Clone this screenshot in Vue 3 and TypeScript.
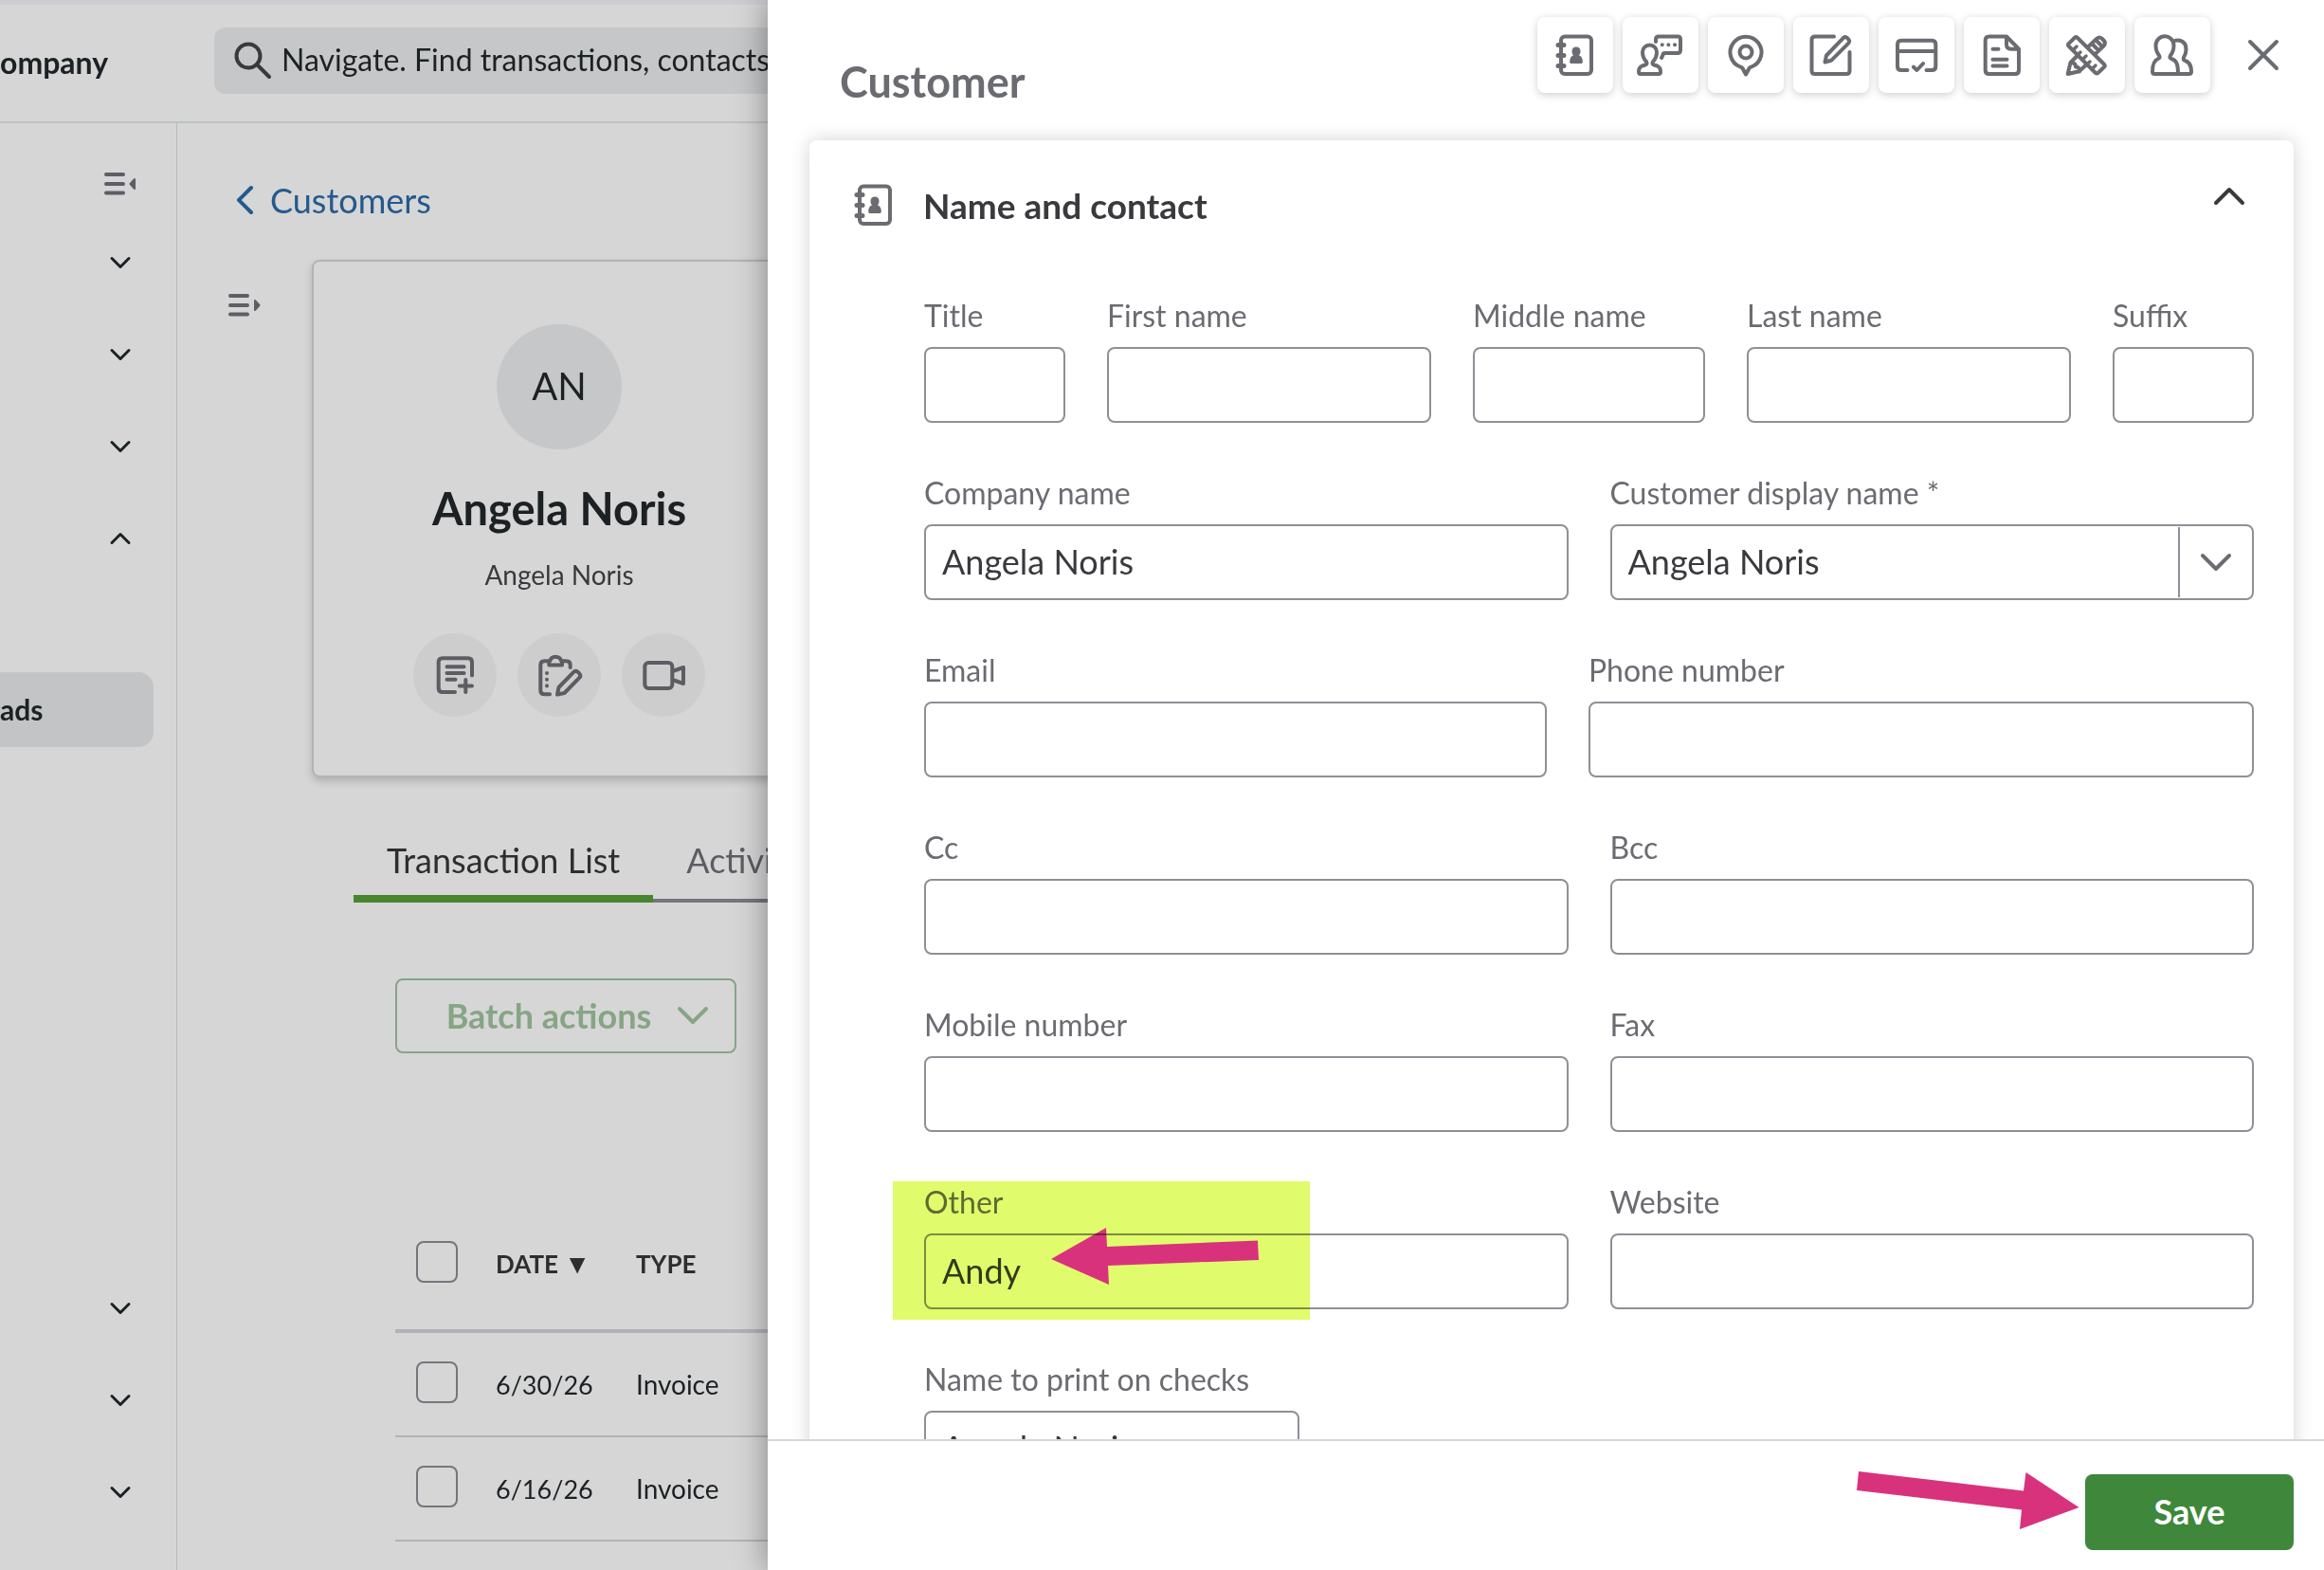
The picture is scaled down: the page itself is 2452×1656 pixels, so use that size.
<script setup lang="ts">
import { ref } from 'vue'

interface Field {
  id: string
  label: string
  value?: string
  marked?: boolean
  combo?: boolean
}

interface FieldRow {
  layout: string
  fields: Field[]
}

interface Transaction {
  date: string
  type: string
}

const icons: Record<string, string> = {
  book: '<rect x="9" y="4.5" width="32" height="39.5" rx="4"/><path d="M6 13.5h6M6 24.5h6M6 35.5h6" stroke-width="5"/><path d="M25 15.5c-3 0-4.500 2-4.500 4.500 0 2 .7 3.300 1.500 4.500-2.500.8-3.800 3-3.800 6.500 0 1.500.6 2 2 2h9.600c1.400 0 2-.5 2-2 0-3.500-1.300-5.700-3.800-6.500.8-1.200 1.500-2.500 1.500-4.500 0-2.500-1.500-4.500-4.500-4.500z" fill="currentColor" stroke="none"/>',
  chat: '<path d="M3 44Q1 44 1 41.500C1 36.500 4 35.500 8 34.500Q10.500 33.500 9 31C6 28 5 25 5 21A7.500 7.500 0 0 1 20 21C20 25 19 28 16 31Q14.500 33.500 17 34.500C21 35.500 24 36.500 24 41.500Q24 44 22 44Z"/><path d="M19 10V7.500Q19 4.500 22 4.500H42Q45 4.500 45 7.500V19Q45 22 42 22H28.500Q26.500 22 26.500 24L25 27M25.700 13.300h.1M32.300 13.300h.1M39 13.300h.1"/>',
  pin: '<path d="M24 44.500L20.500 38Q20 37 18 36.500A16.500 16.500 0 1 1 30 36.500Q28 37 27.500 38Z"/><circle cx="24" cy="21" r="6.500"/>',
  edit: '<path d="M27 4.500H7Q3.500 4.500 3.500 8V40.500Q3.500 44 7 44H40Q43.500 44 43.500 40.500V21"/><path d="M17.500 31.500L19 24.500 37 5.800Q39 4.200 41 6L42.500 7.800Q44 9.800 42 11.800L24 29.800Z"/>',
  card: '<path d="M14.500 40H8Q4 40 4 36V12.700Q4 8.700 8 8.700H40.300Q44.300 8.700 44.300 12.700V36Q44.300 40 40.300 40H34.500M4 20H44M21 36.700L24.500 40 31 33"/>',
  page: '<path d="M29 4.500H10.700Q6.700 4.500 6.700 8.500V40Q6.700 44 10.700 44H38Q42 44 42 40V17.700ZM29 4.500V13Q29 17.700 34 17.700H42M14.500 17.700H20.500M14.500 28.700H29.500M14.500 35.500H29.500"/>',
  tools: '<path d="M13.500 5.500Q12.300 4.500 11.200 5.500L4.500 12.200Q3.500 13.300 4.500 14.500L33 43Q34.300 44 35.500 43L42.200 36.500Q43.300 35.300 42.200 34Z"/><path d="M9 19l4-4M14 24l3-3M19 29l4-4M24 34l3-3M29 39l4-4" stroke-width="3.500"/><path d="M25 15.500L34.500 6.500Q37 4.500 39.500 6.500L41.500 8.500Q44 11 42 14L32.500 23M29 12l7 7M33 8l7 7M13.500 25L6.500 32 3.700 44 15.700 41.300 23 34.500M7 32q5 0 5 4.500 4.500 0 4 5"/>',
  people: '<path d="M5.500 44Q3 44 3 41.500C3 33 5 29.500 9 28Q11.500 27 10 24.500Q6.500 20 6.500 14A9.500 9.700 0 0 1 25.500 14Q25.500 20 22 24.500Q20.500 27 23 28C28 29.500 30 33 30 44Z"/><path d="M26.500 9Q29 8 32 8.700 38.500 10.500 38.500 18 38.500 23 36 26.500 35 29 37.500 30C42 31.500 44 35 44 41.500Q44 44 41.500 44H29"/>',
  note: '<path d="M24 42H11Q6.700 42 6.700 37.700V10.500Q6.700 6.300 11 6.300H37.700Q42 6.300 42 10.500V24.500M15.500 15.300H33.500M15.500 22H33.500M15.500 28.700H24.500M35.300 29V42M28.800 35.500H42"/>',
  clipboard: '<path d="M14 44.300H8.500Q4.300 44.300 4.300 40V13.500Q4.300 9.300 8.500 9.300H13.300V13.500H27V9.300H31.500Q35.700 9.300 35.700 13.500V16M14 9.500Q15.500 4.700 20.200 4.700T26.500 9.500M11 22v.1M11 28.700v.1M11 35.300v.1"/><path d="M22 44.500L23.500 37 39.500 20.700Q41.500 19 43.500 20.700L45.500 22.700Q47.200 24.700 45.500 26.700L29.500 43Z"/>',
  video: '<rect x="4.300" y="11" width="29" height="27" rx="4"/><path d="M35 19.500L45 16V33L35 29.500"/>',
}

const toolbar = [
  { icon: 'book', label: 'Name and contact' },
  { icon: 'chat', label: 'Communication' },
  { icon: 'pin', label: 'Addresses' },
  { icon: 'edit', label: 'Notes and attachments' },
  { icon: 'card', label: 'Payments' },
  { icon: 'page', label: 'Additional info' },
  { icon: 'tools', label: 'Custom fields' },
  { icon: 'people', label: 'Sub-customers' },
]

const quickActions = [
  { icon: 'note', label: 'Add note' },
  { icon: 'clipboard', label: 'Create task' },
  { icon: 'video', label: 'Video call' },
]

const rows = ref<FieldRow[]>([
  {
    layout: 'names',
    fields: [
      { id: 'title', label: 'Title' },
      { id: 'first', label: 'First name' },
      { id: 'middle', label: 'Middle name' },
      { id: 'last', label: 'Last name' },
      { id: 'suffix', label: 'Suffix' },
    ],
  },
  {
    layout: 'halves',
    fields: [
      { id: 'company', label: 'Company name', value: 'Angela Noris' },
      { id: 'display', label: 'Customer display name *', value: 'Angela Noris', combo: true },
    ],
  },
  { layout: 'email', fields: [{ id: 'email', label: 'Email' }, { id: 'phone', label: 'Phone number' }] },
  { layout: 'halves', fields: [{ id: 'cc', label: 'Cc' }, { id: 'bcc', label: 'Bcc' }] },
  { layout: 'halves', fields: [{ id: 'mobile', label: 'Mobile number' }, { id: 'fax', label: 'Fax' }] },
  {
    layout: 'halves',
    fields: [
      { id: 'other', label: 'Other', value: 'Andy', marked: true },
      { id: 'website', label: 'Website' },
    ],
  },
  { layout: 'checks', fields: [{ id: 'checks', label: 'Name to print on checks', value: 'Angela Noris' }] },
])

const transactions: Transaction[] = [
  { date: '6/30/26', type: 'Invoice' },
  { date: '6/16/26', type: 'Invoice' },
  { date: '', type: '' },
]

const upperGroups = [false, false, false, true]
const lowerGroups = [false, false, false]
</script>

<template>
  <div class="app">
    <header class="topbar">
      <span class="company">ompany</span>
      <label class="search">
        <svg width="40" height="40" viewBox="0 0 40 40" class="line dark"><circle cx="16" cy="15" r="12.500" /><path d="M25 24L38 37" /></svg>
        <input type="text" aria-label="Search" placeholder="Navigate. Find transactions, contacts, help, reports, and more." />
      </label>
    </header>

    <div class="body">
      <nav class="sidebar">
        <button class="side-row toggle" aria-label="Collapse menu">
          <svg width="36" height="28" viewBox="0 0 36 28" class="line grey"><path d="M3 4H21M3 14H21M3 23.500H21" /><path d="M33 9L28.500 14 33 19Z" fill="currentColor" stroke-width="2" /></svg>
        </button>
        <button v-for="(open, i) in upperGroups" :key="i" class="side-row" aria-label="Menu group">
          <svg width="28" height="20" viewBox="0 0 28 20" class="line ink"><path :d="open ? 'M5 14.500L14 5.500 23 14.500' : 'M5 5.500L14 14.500 23 5.500'" /></svg>
        </button>
        <a class="side-active" href="#">ads</a>
        <button v-for="(open, i) in lowerGroups" :key="'l' + i" class="side-row" aria-label="Menu group">
          <svg width="28" height="20" viewBox="0 0 28 20" class="line ink"><path d="M5 5.500L14 14.500 23 5.500" /></svg>
        </button>
      </nav>

      <main class="main">
        <a class="back" href="#">
          <svg width="20" height="32" viewBox="0 0 20 32" class="line"><path d="M16 3L3 16 16 29" stroke-width="4" /></svg>
          Customers
        </a>

        <div class="profile">
          <button class="expand" aria-label="Expand list">
            <svg width="36" height="28" viewBox="0 0 36 28" class="line grey"><path d="M3 4H21M3 14H21M3 23.500H21" /><path d="M29 9L33.500 14 29 19Z" fill="currentColor" stroke-width="2" /></svg>
          </button>
          <section class="person">
            <div class="avatar">AN</div>
            <h1>Angela Noris</h1>
            <p>Angela Noris</p>
            <div class="actions">
              <button v-for="a in quickActions" :key="a.icon" :aria-label="a.label">
                <svg width="48" height="48" viewBox="0 0 48 48" class="line" v-html="icons[a.icon]" />
              </button>
            </div>
          </section>
        </div>

        <div class="tabs" role="tablist">
          <button role="tab" class="tab active" aria-selected="true">Transaction List</button>
          <button role="tab" class="tab" aria-selected="false">Activity Feed</button>
        </div>

        <button class="batch">
          Batch actions
          <svg width="36" height="24" viewBox="0 0 36 24" class="line"><path d="M4 5L18 19 32 5" stroke-width="4" /></svg>
        </button>

        <table class="transactions">
          <thead>
            <tr>
              <th class="check"><input type="checkbox" aria-label="Select all" /></th>
              <th class="date">DATE <span class="sort">▼</span></th>
              <th>TYPE</th>
            </tr>
          </thead>
          <tbody>
            <tr v-for="(t, i) in transactions" :key="i">
              <td class="check"><input type="checkbox" :aria-label="'Select row ' + (i + 1)" /></td>
              <td class="date">{{ t.date }}</td>
              <td>{{ t.type }}</td>
            </tr>
          </tbody>
        </table>
      </main>
    </div>

    <aside class="drawer">
      <header class="drawer-head">
        <h2>Customer</h2>
        <div class="toolbar">
          <button v-for="t in toolbar" :key="t.icon" :aria-label="t.label">
            <svg width="48" height="48" viewBox="0 0 48 48" class="line" v-html="icons[t.icon]" />
          </button>
        </div>
        <button class="close" aria-label="Close">
          <svg width="40" height="40" viewBox="0 0 40 40" class="line"><path d="M6 6L34 34M34 6L6 34" /></svg>
        </button>
      </header>

      <div class="drawer-body">
        <section class="sheet">
          <div class="sheet-head">
            <svg width="48" height="48" viewBox="0 0 48 48" class="line" v-html="icons.book" />
            <h3>Name and contact</h3>
            <button aria-label="Collapse section">
              <svg width="36" height="24" viewBox="0 0 36 24" class="line"><path d="M4 19L18 5 32 19" /></svg>
            </button>
          </div>
          <form class="form">
            <div v-for="(row, i) in rows" :key="i" class="row" :class="row.layout">
              <div v-for="f in row.fields" :key="f.id" class="field">
                <label :for="f.id">{{ f.label }}</label>
                <div v-if="f.combo" class="combo">
                  <input :id="f.id" v-model="f.value" type="text" />
                  <button type="button" aria-label="Show names">
                    <svg width="36" height="24" viewBox="0 0 36 24" class="line"><path d="M4 5L18 19 32 5" stroke-width="4" /></svg>
                  </button>
                </div>
                <input v-else :id="f.id" v-model="f.value" class="box" type="text" />
                <div v-if="f.marked" class="marker">
                  <svg width="220" height="60" viewBox="0 0 220 60"><path d="M0 33L58 0 59 20 218 13.500 219 34 60 40 61 60Z" fill="#d9327d" /></svg>
                </div>
              </div>
            </div>
          </form>
        </section>
      </div>

      <footer class="drawer-foot">
        <svg width="235" height="62" viewBox="0 0 235 62"><path d="M2 0L176 20.500 178.500 1 234.500 38 172 61 174 40.500 0 20Z" fill="#d9327d" /></svg>
        <button class="save">Save</button>
      </footer>
    </aside>
  </div>
</template>

<style>
body {
  margin: 0;
  overflow: hidden;
}
</style>

<style scoped>
.app {
  position: relative;
  display: flex;
  flex-direction: column;
  height: 100vh;
  overflow: hidden;
  background: #d6d6d6;
  color: #1c2124;
  font-family: Lato, "Liberation Sans", sans-serif;
}

.app * {
  box-sizing: border-box;
}

button,
input {
  font-family: inherit;
  color: inherit;
}

button {
  display: flex;
  align-items: center;
  justify-content: center;
  padding: 0;
  border: 0;
  background: none;
}

a {
  color: inherit;
  text-decoration: none;
}

h1,
h2,
h3,
p {
  margin: 0;
}

svg {
  display: block;
  flex: none;
}

.line {
  fill: none;
  stroke: currentColor;
  stroke-width: 4;
  stroke-linecap: round;
  stroke-linejoin: round;
  overflow: visible;
}

.dark {
  color: #393a3d;
}

.grey {
  color: #5e5f66;
}

.ink {
  stroke-width: 3;
}

.topbar {
  display: flex;
  flex: none;
  height: 130px;
  border-top: 5px solid #cbcdd0;
  border-bottom: 2px solid #bcc2c6;
}

.company {
  width: 226px;
  padding-top: 41px;
  font-size: 32px;
  font-weight: 700;
  line-height: 40px;
}

.search {
  display: flex;
  flex: 1;
  align-items: center;
  gap: 11px;
  height: 70px;
  margin-top: 24px;
  padding-left: 20px;
  border-radius: 12px;
  background: #c6c7c9;
}

.search input {
  flex: 1;
  padding: 0 0 4px;
  border: 0;
  background: none;
  font-size: 32px;
}

.search input::placeholder {
  color: #1c2124;
}

.body {
  display: flex;
  flex: 1;
  min-height: 0;
}

.sidebar {
  flex: none;
  width: 187px;
  padding-top: 29px;
  border-right: 1px solid #b4b9bd;
}

.side-row {
  justify-content: flex-end;
  width: 100%;
  height: 97px;
  padding-right: 45px;
}

.toggle {
  height: 69px;
  padding-right: 41px;
}

.side-active {
  display: block;
  width: 162px;
  height: 79px;
  margin: 93px 0 543px;
  border-radius: 0 16px 16px 0;
  background: #c3c4c6;
  font-size: 30px;
  font-weight: 700;
  line-height: 78px;
}

.main {
  flex: 1;
  min-width: 0;
  padding-top: 59px;
}

.back {
  display: flex;
  align-items: center;
  gap: 16px;
  margin-left: 62px;
  color: #24598f;
  font-size: 36px;
  line-height: 44px;
}

.profile {
  display: flex;
  align-items: flex-start;
  gap: 52px;
  margin: 41px 0 0 52px;
}

.expand {
  width: 38px;
  height: 44px;
  margin-top: 26px;
}

.person {
  display: flex;
  flex-direction: column;
  align-items: center;
  width: 522px;
  height: 546px;
  padding-top: 66px;
  border: 2px solid #b2b3b8;
  border-radius: 8px;
  box-shadow: 0 4px 8px rgba(0, 0, 0, 0.18);
}

.avatar {
  width: 132px;
  height: 132px;
  border-radius: 50%;
  background: #c6c7c9;
  font-size: 40px;
  line-height: 130px;
  text-align: center;
}

.person h1 {
  margin-top: 34px;
  font-size: 47px;
  line-height: 56px;
}

.person p {
  margin-top: 24px;
  color: #393a3d;
  font-size: 28px;
  line-height: 36px;
}

.actions {
  display: flex;
  gap: 22px;
  margin-top: 44px;
}

.actions button {
  width: 88px;
  height: 88px;
  border-radius: 50%;
  background: #cdcdcd;
  color: #5c5c63;
}

.tabs {
  display: flex;
  margin: 52px 0 0 186px;
  box-shadow: inset 0 -4px #75767d;
}

.tab {
  padding: 0 35px 2px;
  border-bottom: 8px solid transparent;
  color: #5c5d64;
  font-size: 36px;
  line-height: 70px;
}

.tab.active {
  border-color: #48852c;
  color: #2d2e30;
}

.batch {
  gap: 26px;
  width: 360px;
  height: 79px;
  margin: 80px 0 0 230px;
  padding: 0 0 2px 26px;
  border: 2px solid #86a585;
  border-radius: 8px;
  color: #86a585;
  font-size: 36px;
  font-weight: 700;
}

.transactions {
  width: calc(100% - 230px);
  margin: 153px 0 0 230px;
  border-collapse: separate;
  border-spacing: 0;
  font-size: 28px;
  text-align: left;
}

.transactions th,
.transactions td {
  height: 110px;
  padding: 0;
  border-bottom: 2px solid #b2b3b8;
}

.transactions th {
  height: 142px;
  border-bottom-width: 4px;
  color: #2d2e30;
  font-size: 26px;
}

.transactions .check {
  width: 106px;
  padding: 0 0 4px 22px;
}

.transactions .date {
  width: 148px;
}

.transactions td.date {
  font-size: 27px;
}

.sort {
  font-size: 28px;
  line-height: 28px;
}

.transactions input {
  display: block;
  width: 44px;
  height: 44px;
  margin: 0;
  border: 2px solid #75767d;
  border-radius: 8px;
  appearance: none;
}

.drawer {
  position: absolute;
  inset: 0 0 0 810px;
  display: flex;
  flex-direction: column;
  background: #fff;
  box-shadow: 0 0 32px rgba(0, 0, 0, 0.4);
  color: #6b6c72;
}

.drawer-head {
  display: flex;
  flex: none;
  align-items: flex-start;
  height: 148px;
  padding: 18px 44px 0 76px;
}

.drawer-head h2 {
  flex: 1;
  padding-top: 40px;
  font-size: 45px;
  line-height: 56px;
}

.toolbar {
  display: flex;
  gap: 10px;
}

.toolbar button {
  width: 80px;
  height: 80px;
  border-radius: 8px;
  background: #fff;
  box-shadow: 0 2px 8px rgba(0, 0, 0, 0.2);
}

.close {
  width: 40px;
  height: 80px;
  margin-left: 36px;
}

.drawer-body {
  flex: 1;
  min-height: 0;
  margin-top: -30px;
  padding: 30px 32px 0 44px;
  overflow: hidden;
}

.sheet {
  min-height: 100%;
  border-radius: 8px;
  box-shadow: 0 0 20px rgba(0, 0, 0, 0.18);
}

.sheet-head {
  display: flex;
  align-items: center;
  height: 136px;
  padding: 0 50px 0 44px;
}

.sheet-head h3 {
  flex: 1;
  margin-left: 28px;
  color: #393a3d;
  font-size: 37px;
}

.sheet-head button {
  padding-bottom: 18px;
  color: #393a3d;
}

.form {
  display: flex;
  flex-direction: column;
  gap: 55px;
  padding: 30px 42px 40px 121px;
}

.row {
  display: grid;
  gap: 44px;
}

.names {
  grid-template-columns: 149fr 342fr 245fr 342fr 149fr;
}

.halves {
  grid-template-columns: 1fr 1fr;
}

.email {
  grid-template-columns: 657fr 702fr;
}

.checks {
  grid-template-columns: 396px;
}

.field {
  position: relative;
  display: flex;
  flex-direction: column;
  min-width: 0;
}

.field label {
  height: 52px;
  font-size: 32px;
  line-height: 38px;
  white-space: nowrap;
}

.box,
.combo {
  width: 100%;
  height: 80px;
  border: 2px solid #8d9096;
  border-radius: 8px;
  background: #fff;
}

.box,
.combo input {
  padding: 0 17px 3px;
  color: #393a3d;
  font-size: 36px;
}

.combo {
  display: flex;
}

.combo input {
  flex: 1;
  min-width: 0;
  border: 0;
  background: none;
}

.combo button {
  width: 78px;
  margin: 1px 0;
  border-left: 2px solid #8d9096;
}

.marker {
  position: absolute;
  top: -3px;
  left: -33px;
  width: 440px;
  height: 146px;
  padding: 49px 0 0 167px;
  background: #e0fc6c;
  mix-blend-mode: multiply;
  pointer-events: none;
}

.drawer-foot {
  position: relative;
  display: flex;
  flex: none;
  justify-content: flex-end;
  gap: 6px;
  height: 138px;
  padding: 32px 32px 0 0;
  border-top: 2px solid #d4d7dc;
  background: #fff;
}

.save {
  width: 220px;
  height: 80px;
  margin-top: 3px;
  padding-bottom: 2px;
  border-radius: 8px;
  background: #3e873b;
  color: #fff;
  font-size: 36px;
  font-weight: 700;
}
</style>
